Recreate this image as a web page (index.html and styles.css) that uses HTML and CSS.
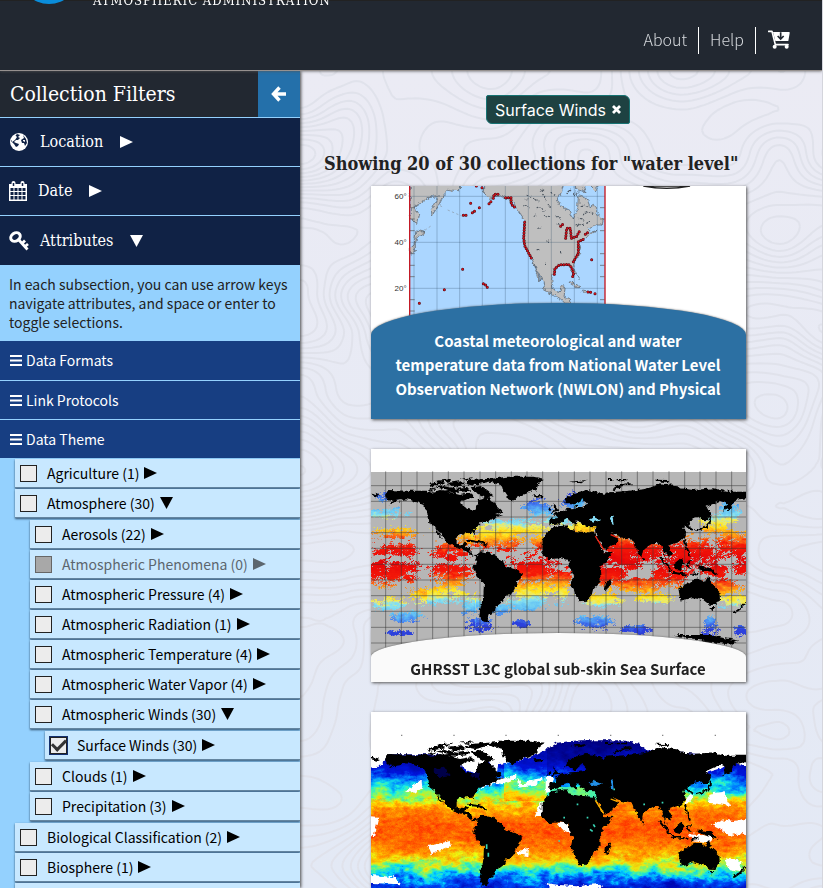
FILE: index.html
```html
<!DOCTYPE html>
<html lang="en">
<head>
<meta charset="utf-8">
<meta name="viewport" content="width=device-width, initial-scale=1">
<title>Collections</title>
<link rel="stylesheet" href="styles.css">
</head>
<body>
<svg class="defs" width="0" height="0" aria-hidden="true">
  <defs>
    <filter id="rough" x="-5%" y="-5%" width="110%" height="110%">
      <feTurbulence type="fractalNoise" baseFrequency="0.07" numOctaves="3" seed="4"/>
      <feDisplacementMap in="SourceGraphic" scale="16" xChannelSelector="R" yChannelSelector="G"/>
    </filter>
    <symbol id="right" viewBox="0 0 13 12"><path d="M0 0 13 6 0 12Z" fill="currentColor"/></symbol>
    <symbol id="down" viewBox="0 0 13 12"><path d="M0 0H13L6.500 12Z" fill="currentColor"/></symbol>
    <symbol id="bars" viewBox="0 0 12 11"><path d="M0 1H12M0 5.500H12M0 10H12" stroke="currentColor" stroke-width="2"/></symbol>
    <g id="land">
      <path d="M75 165 85 150 140 152 200 152 215 158 240 150 300 165 330 160 345 172 312 180 300 185 305 198 345 210 352 192 350 180 380 170 400 190 427 215 405 222 430 225 400 235 385 245 360 250 340 275 346 292 335 278 300 282 290 290 290 310 300 317 318 305 322 312 312 322 330 325 335 345 355 344 350 352 336 348 322 335 285 322 262 308 250 290 230 265 240 285 252 302 238 290 225 262 208 250 205 220 190 195 160 182 140 178 110 182 80 200 100 183 80 180Z"/>
      <path d="M385 118 440 110 520 110 556 117 535 130 530 150 500 160 470 170 458 184 445 178 430 155 425 135 390 125ZM330 120 420 114 395 124 345 135 312 128ZM205 148 250 138 300 148 290 158 230 157ZM330 142 365 138 385 152 402 168 382 175 350 158ZM205 131 250 126 255 133 210 140ZM262 128 300 124 315 134 280 142ZM230 143 205 155 270 150ZM300 116 340 112 325 120ZM290 143 325 140 330 152 305 156ZM232 122 275 117 270 124 236 128Z"/>
      <path d="M355 340 365 334 400 342 435 368 440 380 480 392 486 405 470 430 465 452 440 468 435 480 415 495 405 500 400 520 385 525 382 540 390 547 368 545 358 530 362 500 370 470 372 430 350 410 340 385 348 365Z"/>
      <path d="M575 262 620 256 625 268 660 275 703 278 713 302 733 337 758 335 745 358 720 385 722 425 700 445 695 465 678 482 655 484 645 460 635 430 640 405 628 380 625 360 600 355 565 358 545 335 545 300 560 280ZM750 415 754 428 742 453 732 450 735 430Z"/>
      <path d="M568 236 592 234 582 222 610 212 630 205 660 203 682 195 668 180 655 190 645 201 635 190 612 190 618 178 640 160 680 150 700 152 730 165 735 158 760 156 800 153 850 148 880 140 900 130 950 136 960 145 1000 150 1060 145 1100 155 1158 155 1158 175 1125 180 1112 205 1090 214 1098 190 1080 182 1040 200 1050 222 1044 240 1028 240 1020 232 990 240 985 255 1002 268 996 272 975 256 970 262 978 288 960 305 940 312 925 318 936 340 930 350 915 337 920 365 905 325 895 305 875 312 850 328 845 352 832 335 820 300 785 292 755 278 775 296 764 315 735 331 712 295 705 272 706 262 680 261 666 252 650 240 652 258 640 252 623 236 612 240 595 254 568 256Z"/>
      <path d="M580 190 592 200 602 212 575 216 582 205ZM564 204 574 202 572 212 562 212ZM520 166 550 165 548 172 525 173ZM630 125 680 120 660 130ZM735 117H760V120H735ZM770 117H802V121H770ZM885 119 925 120 920 126 890 124Z"/>
      <path d="M940 375 965 355 974 368 960 390 946 386ZM1010 376 1030 379 1052 385 1076 405 1058 400 1040 395 1020 388ZM980 365 995 363 985 372 992 384 982 382ZM955 445 985 430 1000 418 1020 415 1035 425 1045 408 1055 432 1078 455 1080 475 1066 495 1048 494 1030 480 1000 475 962 485ZM1048 501 1063 501 1056 512ZM33 158 60 165 50 170 33 166ZM845 350 853 354 850 362Z"/>
      <path d="M760 149Q780 132 815 133M1006 271 1036 263 1049 246 1050 230M900 350 936 396M936 398 985 404M975 300 980 322 990 350M1122 520 1140 506 1158 488M325 302 355 306 380 314M994 405 1015 402" fill="none" stroke="#000" stroke-width="6"/>
    </g>
  </defs>
</svg>

<div class="app">
  <header class="top">
    <div class="brand"><span class="seal"></span><span class="agency">ATMOSPHERIC ADMINISTRATION</span></div>
    <nav class="links">
      <a href="#about">About</a>
      <a href="#help">Help</a>
      <a href="#cart" aria-label="Cart"><svg width="22" height="19" viewBox="0 0 66 57" aria-hidden="true"><path d="M2 4H12L22 44H60" fill="none" stroke="#fff" stroke-width="5" stroke-linecap="round" stroke-linejoin="round"/><path d="M15 6H63Q66 6 65 10L61 33H22Z" fill="#fff"/><path d="M38 7V25M29 18 38 27 47 18" fill="none" stroke="#222831" stroke-width="5"/><circle cx="20" cy="50" r="6" fill="#fff"/><circle cx="56" cy="50" r="6" fill="#fff"/></svg></a>
    </nav>
  </header>

  <div class="body">
    <aside class="side">
      <div class="side-title"><h1>Collection Filters</h1>
        <button class="collapse" aria-label="Hide filters"><svg width="16" height="16" viewBox="0 0 16 16" aria-hidden="true"><path d="M8.500 1.500 2.500 8 8.500 14.500M3 8H15" fill="none" stroke="#fff" stroke-width="3.400"/></svg></button>
      </div>
      <button class="filter"><svg width="20" height="20" viewBox="0 0 20 20" aria-hidden="true"><circle cx="10" cy="10" r="9" fill="#fff"/><path d="M8 2 11 3 9 5 11 6 9 8 7 8 5 10 7 11 10 12 9 14 7 15 5 12 2 9 3 8 4 6ZM14 3 17 7 18 11 16 14 15 11 13 11 12 8 15 6Z" fill="#102245"/><path d="M3 6 6 3 8 5 6 8 3 10ZM14 8 16 8 16 10 14 9Z" fill="#fff"/></svg><span>Location</span><svg class="caret" width="13" height="12" aria-hidden="true"><use href="#right"/></svg></button>
      <button class="filter"><svg width="18" height="20" viewBox="0 0 18 20" aria-hidden="true"><path d="M0 3H18V20H0Z" fill="#fff"/><path d="M1.500 7H4.500V10H1.500ZM5.500 7H8.500V10H5.500ZM9.500 7H12.500V10H9.500ZM13.500 7H16.500V10H13.500ZM1.500 11H4.500V14H1.500ZM5.500 11H8.500V14H5.500ZM9.500 11H12.500V14H9.500ZM13.500 11H16.500V14H13.500ZM1.500 15H4.500V18.500H1.500ZM5.500 15H8.500V18.500H5.500ZM9.500 15H12.500V18.500H9.500ZM13.500 15H16.500V18.500H13.500Z" fill="#102245"/><path d="M4.500 2V5M13.500 2V5" stroke="#fff" stroke-width="4" stroke-linecap="round"/><path d="M4.500 2V5M13.500 2V5" stroke="#102245" stroke-width="1.500"/></svg><span>Date</span><svg class="caret" width="13" height="12" aria-hidden="true"><use href="#right"/></svg></button>
      <button class="filter open"><svg width="20" height="20" viewBox="0 0 20 20" aria-hidden="true"><ellipse cx="6.500" cy="6" rx="4" ry="5" transform="rotate(55 6.500 6)" fill="none" stroke="#fff" stroke-width="3"/><path d="M9 8 18.500 18.500M13 12.500 16 9.500M16 15.500 19 13" fill="none" stroke="#fff" stroke-width="2.800"/></svg><span>Attributes</span><svg class="caret" width="13" height="12" aria-hidden="true"><use href="#down"/></svg></button>
      <p class="hint">In each subsection, you can use arrow keys navigate attributes, and space or enter to toggle selections.</p>
      <button class="section"><svg width="12" height="11" aria-hidden="true"><use href="#bars"/></svg>Data Formats</button>
      <button class="section"><svg width="12" height="11" aria-hidden="true"><use href="#bars"/></svg>Link Protocols</button>
      <button class="section"><svg width="12" height="11" aria-hidden="true"><use href="#bars"/></svg>Data Theme</button>
      <ul class="tree">
        <li><div class="row"><label><input type="checkbox">Agriculture (1)</label><button aria-label="Expand Agriculture"><svg width="13" height="12"><use href="#right"/></svg></button></div></li>
        <li><div class="row"><label><input type="checkbox">Atmosphere (30)</label><button aria-label="Collapse Atmosphere"><svg width="13" height="12"><use href="#down"/></svg></button></div>
          <ul>
            <li><div class="row"><label><input type="checkbox">Aerosols (22)</label><button aria-label="Expand Aerosols"><svg width="13" height="12"><use href="#right"/></svg></button></div></li>
            <li><div class="row off"><label><input type="checkbox" disabled>Atmospheric Phenomena (0)</label><button aria-label="Expand Phenomena"><svg width="13" height="12"><use href="#right"/></svg></button></div></li>
            <li><div class="row"><label><input type="checkbox">Atmospheric Pressure (4)</label><button aria-label="Expand Pressure"><svg width="13" height="12"><use href="#right"/></svg></button></div></li>
            <li><div class="row"><label><input type="checkbox">Atmospheric Radiation (1)</label><button aria-label="Expand Radiation"><svg width="13" height="12"><use href="#right"/></svg></button></div></li>
            <li><div class="row"><label><input type="checkbox">Atmospheric Temperature (4)</label><button aria-label="Expand Temperature"><svg width="13" height="12"><use href="#right"/></svg></button></div></li>
            <li><div class="row"><label><input type="checkbox">Atmospheric Water Vapor (4)</label><button aria-label="Expand Water Vapor"><svg width="13" height="12"><use href="#right"/></svg></button></div></li>
            <li><div class="row"><label><input type="checkbox">Atmospheric Winds (30)</label><button aria-label="Collapse Winds"><svg width="13" height="12"><use href="#down"/></svg></button></div>
              <ul>
                <li><div class="row"><label><input type="checkbox" checked>Surface Winds (30)</label><button aria-label="Expand Surface Winds"><svg width="13" height="12"><use href="#right"/></svg></button></div></li>
              </ul>
            </li>
            <li><div class="row"><label><input type="checkbox">Clouds (1)</label><button aria-label="Expand Clouds"><svg width="13" height="12"><use href="#right"/></svg></button></div></li>
            <li><div class="row"><label><input type="checkbox">Precipitation (3)</label><button aria-label="Expand Precipitation"><svg width="13" height="12"><use href="#right"/></svg></button></div></li>
          </ul>
        </li>
        <li><div class="row"><label><input type="checkbox">Biological Classification (2)</label><button aria-label="Expand Biological Classification"><svg width="13" height="12"><use href="#right"/></svg></button></div></li>
        <li><div class="row"><label><input type="checkbox">Biosphere (1)</label><button aria-label="Expand Biosphere"><svg width="13" height="12"><use href="#right"/></svg></button></div></li>
        <li><div class="row"></div></li>
      </ul>
    </aside>

    <main class="results">
      <svg class="topo" viewBox="0 0 522 818" preserveAspectRatio="xMidYMid slice" aria-hidden="true"><path id="contours"/></svg>
      <button class="chip">Surface Winds <svg width="9" height="9" viewBox="0 0 9 9" aria-hidden="true"><path d="M1 1 8 8M8 1 1 8" stroke="#fff" stroke-width="2.800"/></svg></button>
      <h2>Showing 20 of 30 collections for "water level"</h2>
      <div class="cards">
        <a class="card blue" href="#nwlon">
          <svg class="art" viewBox="33 33 1125 700" preserveAspectRatio="xMidYMin slice" aria-hidden="true">
            <rect x="33" y="33" width="1125" height="700" fill="#fff"/>
            <rect x="149" y="0" width="586" height="450" fill="#abd6ff"/>
            <g fill="#bfbfbf" stroke="#4d5660" stroke-width="2" filter="url(#rough)">
              <path d="M372 23 370 50 392 70 405 65 425 62 442 70 460 85 475 110 492 135 490 190 500 225 515 250 524 270 535 295 548 320 556 345 575 358 600 370 615 385 633 385 631 370 612 368 616 333 604 332 600 350 580 345 575 315 582 285 590 272 610 270 632 272 638 300 646 298 640 265 662 235 655 205 680 185 712 166 692 172 682 163 700 150 726 150 730 135 715 120 700 88 690 95 680 70 655 62 653 100 640 132 630 108 605 95 592 75 605 50 612 23Z"/>
              <path d="M151 23H300L298 48 268 44 250 60 235 92 216 122 214 105 235 65 205 68 165 95 178 120 172 150 160 135 151 130ZM168 165 195 172 172 186 166 205 166 232 151 238 151 220 162 210ZM630 320 662 337 650 338 630 325ZM668 345 682 348 676 354ZM630 23H670L675 50 655 45ZM680 23H725L705 48Z"/>
              <path d="M520 265 535 300 543 318 532 305ZM663 350H670M648 295 658 315"/>
            </g>
            <path d="M490 92l18 3M518 70l15 8M530 98l13-3M552 120l18 5M548 60l10 15M500 60l12 5M590 125l15 5M562 90l12 8M575 55l12 7M655 130l18 5M650 150l22-3M680 110l20 5M665 90l18 8M520 125l8-5M535 155l8 5M560 200l8-3M530 225l8-4M600 230h8M555 265h8M640 60l15-10M540 45l15 5M668 120l15-10M680 145l12-8M505 75l-8-3M600 150l-10-3M545 100l10 12M630 45l-10 8" stroke="#4d5660" stroke-width="4" stroke-dasharray="5 3" filter="url(#rough)"/>
            <path d="M240 92l12 6M263 105l42 18M172 182l42-30" stroke="#8b98a5" stroke-width="2" stroke-dasharray="7 7"/>
            <path d="M162 33V430M231 33V430M299 33V430M367 33V430M436 33V430M505 33V430M574 33V430M643 33V430M712 33V430M149 64H735M149 202H735M149 340H735" stroke="#2d4961" stroke-opacity=".55" stroke-width="1.500"/>
            <path d="M150 98H164M150 132H164M150 167H164M150 236H164M150 271H164M150 305H164M150 374H164M150 408H164M720 98H734M720 132H734M720 167H734M720 236H734M720 271H734M720 305H734M720 374H734" stroke="#555" stroke-width="2"/>
            <path d="M149 33V430M735 33V430" stroke="#c31925" stroke-width="4"/>
            <g class="stations"><path id="st" d="M310 121H320M337 113 347 106M358 98H366M387 86 394 79M400 70 402 58 418 58M437 68 453 68 454 88 466 98M494 142 491 190 494 212 515 251M178 385h.1M253 344h.1M308 283h.1M332 85h.1M366 38h.1M349 33h.1M370 326 378 331 385 341M583 298 585 280 598 270 625 268 634 276 641 295 637 308M640 260 655 235 655 200 676 190M602 154 608 148M617 190 620 160 631 160 634 190 650 184 659 168M676 178 687 170M695 254h.1M684 351 695 352M705 356h.1"/><use href="#st" class="inner"/></g>
            <path d="M850 33Q920 47 990 33Z" fill="#d5d5d5" stroke="#222" stroke-width="4"/>
            <g class="axis"><text x="140" y="73">60°</text><text x="140" y="211">40°</text><text x="140" y="349">20°</text></g>
          </svg>
          <span class="caption">Coastal meteorological and water temperature data from National Water Level Observation Network (NWLON) and Physical</span>
        </a>
        <a class="card" href="#ghrsst">
          <canvas class="art" id="sst" width="375" height="233"></canvas>
          <svg class="art" viewBox="33 27 1125 699" preserveAspectRatio="xMidYMin slice" aria-hidden="true">
            <path d="M77 94V726M124 94V726M171 94V726M218 94V726M265 94V726M312 94V726M360 94V726M407 94V726M454 94V726M501 94V726M548 94V726M596 94V726M643 94V726M690 94V726M738 94V726M785 94V726M832 94V726M879 94V726M927 94V726M974 94V726M1020 94V726M1068 94V726M1115 94V726M33 137H1158M33 184H1158M33 231H1158M33 278H1158M33 325H1158M33 373H1158M33 420H1158M33 467H1158M33 514H1158M33 562H1158M33 609H1158" stroke="#333" stroke-opacity=".5" stroke-width="3"/>
            <g filter="url(#rough)"><use href="#land"/><path d="M940 585 1050 585 1135 602 1110 614 1030 602Z"/>
              <path d="M685 240 702 230 724 240 705 246Z" fill="#84daf4"/><path d="M750 232 760 226 764 255 753 252Z" fill="#84daf4"/></g>
            <path d="M706 288 731 329M752 284 773 293" stroke="#f22210" stroke-width="4"/>
            <path d="M640 196 662 188 668 176" fill="none" stroke="#48b4f0" stroke-width="4"/>
          </svg>
          <span class="caption">GHRSST L3C global sub-skin Sea Surface</span>
        </a>
        <a class="card" href="#wind" aria-label="Sea surface collection">
          <canvas class="art" id="heat" width="375" height="233"></canvas>
          <svg class="art" viewBox="33 33 1125 699" preserveAspectRatio="xMidYMin slice" aria-hidden="true">
            <g filter="url(#rough)">
              <path d="M13 13H1178V195L1110 185 1085 202 1040 215 1030 160 860 148 835 128 790 118 660 118 590 125 540 155 520 165 470 180 440 185 415 190 410 215 385 180 360 190 345 218 300 190 240 160 90 160 50 200 13 205ZM135 272 185 238 187 258 165 275ZM205 435 270 420 272 435 215 460ZM13 348 55 350 42 405 13 408ZM470 452 504 440 502 465 475 460ZM470 225 485 250 525 235 550 230 520 255 475 260ZM355 270 385 240 440 230 470 220 465 235 430 250 405 245ZM557 225H580L570 270 557 280ZM545 300 525 345 548 345ZM590 365 620 365 635 400 610 388ZM1045 278 1090 272 1112 315 1045 305ZM1055 370 1090 355 1120 360 1178 350V405L1130 398 1110 405 1085 385ZM1090 470 1145 480 1140 510 1110 505ZM985 400 1060 405 1050 425 1000 418ZM13 520 100 528 120 550 13 545ZM555 545 600 552 650 556 720 548 730 556 700 570 660 562 580 566ZM975 300 990 280 1000 285 980 310Z" fill="#fff"/>
              <use href="#land" y="9"/>
              <path d="M215 205 255 200 270 225 240 230ZM330 220 360 215 355 235Z" fill="#05096a" opacity=".7"/>
              <path d="M300 195 320 180 350 190 350 205 330 212Z" fill="#fff"/>
              <path d="M685 249 702 239 724 249 705 255ZM750 241 760 235 764 264 753 261Z" fill="#208fe8"/>
            </g>
            <path d="M595 420h5M650 310h5M700 370l5 8M680 350h5M610 350h5M760 265h5M640 270h6M380 430v14M385 455v12M690 385l8 6M850 310h5M905 305h5" stroke="#38d6b6" stroke-width="5"/>
            <path d="M706 298 731 337M752 294 773 302" stroke="#ffb200" stroke-width="4"/>
            <path d="M123 103h4M280 103h4M436 103h4M593 103h4M750 103h4M906 103h4M1064 103h4" stroke="#888" stroke-width="4"/>
          </svg>
        </a>
      </div>
    </main>
  </div>
</div>
<script src="draw.js"></script>
</body>
</html>
```
FILE: styles.css
```css
* { box-sizing: border-box; }
body {
  margin: 0;
  font-family: "Noto Sans CJK SC", "Noto Sans", sans-serif;
  font-size: 14px;
  line-height: 19px;
  color: #222;
}
button { font: inherit; color: inherit; border: 0; padding: 0; background: none; cursor: pointer; }
.defs { position: absolute; }
.app { height: 100vh; display: flex; flex-direction: column; overflow: hidden; border-right: 1px solid #d4d5dc; }

.top {
  position: relative;
  z-index: 2;
  height: 71px;
  flex: none;
  display: flex;
  justify-content: space-between;
  align-items: flex-start;
  padding: 0 32px 0 19px;
  background: #222831;
  border-top: 1px solid #222;
  border-bottom: 1px solid #96918f;
  box-shadow: 0 0 3px #555;
}
.brand { display: flex; align-items: flex-end; gap: 14px; height: 60px; margin-top: -57px; }
.seal { width: 60px; height: 60px; border-radius: 50%; background: #0a8ddb; }
.agency { margin-bottom: -4px; color: #fff; font-family: "DejaVu Serif Condensed", "DejaVu Serif", serif; font-size: 13px; line-height: 14px; letter-spacing: 1px; }
.links { display: flex; padding-top: 26px; }
.links a {
  display: flex;
  align-items: center;
  height: 27px;
  padding: 0 11px 3px;
  color: #d5d8dc;
  font-size: 16px;
  font-weight: 300;
  line-height: 24px;
  text-decoration: none;
  border-right: 1px solid #fff;
}
.links a:last-child { padding: 0 0 3px 12px; border: 0; }

.body { flex: 1; min-height: 0; display: flex; }
.side {
  width: 300px;
  flex: none;
  overflow-y: auto;
  scrollbar-width: none;
  background: #94d1fe;
  box-shadow: 1px 0 3px #444;
  z-index: 1;
}
.side-title { display: flex; height: 47px; background: #222831; border-bottom: 1px solid #94d1fe; }
.side-title h1 {
  flex: 1;
  margin: 0;
  padding-left: 10px;
  color: #fff;
  font: 400 21px/46px "DejaVu Serif Condensed", "DejaVu Serif", serif;
}
.collapse { width: 42px; display: grid; place-items: center; background: #2470aa; }
.filter {
  display: flex;
  align-items: center;
  width: 100%;
  height: 49px;
  padding: 0 9px;
  gap: 11px;
  background: #102245;
  border-bottom: 1px solid #94d1fe;
  color: #fff;
  font: 400 16px/24px "DejaVu Serif Condensed", "DejaVu Serif", serif;
}
.filter.open { border-bottom: 0; }
.filter .caret { margin-left: 6px; }
.hint { margin: 0; padding: 10px 9px 9px; }
.section {
  display: flex;
  align-items: center;
  gap: 4px;
  width: 100%;
  height: 39px;
  padding: 0 10px;
  background: #173e82;
  color: #fff;
}
.section + .section { border-top: 1px solid #94d1fe; }
.tree, .tree ul { margin: 0; padding: 0 0 0 15px; list-style: none; }
.tree ul { padding: 1px 0 1px 15px; }
.row {
  display: flex;
  align-items: center;
  gap: 5px;
  height: 29px;
  margin-top: 1px;
  padding-left: 5px;
  background: #c8e8ff;
  color: #000;
  box-shadow: 0 1px 2px #31506c;
  border-bottom: 1px solid #6485a0;
}
.row label { display: flex; align-items: center; gap: 10px; }
.row button { display: flex; }
.row.off { color: #5c666e; }
input[type="checkbox"] {
  appearance: none;
  width: 17px;
  height: 17px;
  margin: 0;
  background: #ececec;
  border: 1px solid #222;
}
input[type="checkbox"]:disabled { background: #a8a8a8; border-color: #666; }
input[type="checkbox"]:checked { display: grid; place-items: center; outline: 1px solid #14306e; }
input[type="checkbox"]:checked::before {
  content: "";
  width: 11px;
  height: 6px;
  margin-bottom: 4px;
  border: solid #333;
  border-width: 0 0 3px 3px;
  rotate: -45deg;
}

.results {
  position: relative;
  flex: 1;
  min-width: 0;
  overflow-y: auto;
  scrollbar-width: none;
  display: flex;
  flex-direction: column;
  align-items: center;
  padding: 24px 6px 0 0;
  background: linear-gradient(#ebebf4, #e3e9f5);
}
.topo { position: absolute; inset: 0; width: 100%; height: 100%; }
.topo path { fill: none; stroke: #e0e2eb; stroke-width: 2; }
.chip {
  position: relative;
  flex: none;
  display: flex;
  align-items: center;
  gap: 6px;
  height: 29px;
  padding: 0 8px;
  color: #fff;
  background: #1e4242;
  border: 1px solid #167373;
  border-radius: 2px 6px 2px 6px;
  font: 400 16px/24px Inter, sans-serif;
}
.results h2 {
  position: relative;
  align-self: stretch;
  margin: 26px 0 9px;
  padding-left: 24px;
  font: 700 18px/27px "DejaVu Serif Condensed", "DejaVu Serif", serif;
  white-space: nowrap;
}
.cards { position: relative; width: 100%; max-width: 375px; display: flex; flex-direction: column; gap: 30px; }
.card {
  position: relative;
  display: flex;
  align-items: flex-end;
  height: 233px;
  flex: none;
  overflow: hidden;
  background: #fff;
  box-shadow: 1px 1px 3px #555;
  color: #222;
  text-decoration: none;
}
.art { position: absolute; inset: 0; width: 100%; height: 100%; }
.caption {
  position: relative;
  width: 100%;
  padding: 24px 28px 1px;
  text-align: center;
  font-size: 15px;
  font-weight: 700;
  line-height: 24px;
  background: #fafafa;
  border-radius: 50% 50% 0 0 / 24px;
  box-shadow: 0 0 2px #555;
}
.blue .caption { padding: 26px 24px 18px; color: #fff; background: #2c70a3; border-radius: 50% 50% 0 0 / 32px; }
.stations { fill: none; stroke: #4a0b10; stroke-width: 9; stroke-linecap: round; stroke-dasharray: 0 8; }
.stations .inner { stroke: #d4131f; stroke-width: 6; }
.axis { font: 24px "Liberation Sans", sans-serif; fill: #333; text-anchor: end; }
```
FILE: draw.js
```js
function hash(x, y) {
  const s = Math.sin(x * 127.1 + y * 311.7) * 43758.5453;
  return s - Math.floor(s);
}
function noise(x, y) {
  const i = Math.floor(x), j = Math.floor(y);
  let u = x - i, v = y - j;
  u = u * u * (3 - 2 * u);
  v = v * v * (3 - 2 * v);
  const a = hash(i, j) * (1 - u) + hash(i + 1, j) * u;
  const b = hash(i, j + 1) * (1 - u) + hash(i + 1, j + 1) * u;
  return a * (1 - v) + b * v;
}
function fbm(x, y) {
  return noise(x, y) * 0.5 + noise(x * 2, y * 2) * 0.28 + noise(x * 4, y * 4) * 0.22;
}

// Contour lines of a smooth height field, by marching squares.
function contours() {
  const step = 4, f = (x, y) => noise(x / 95 + 3, y / 80 + 8) * 0.75 + noise(x / 48, y / 44) * 0.25;
  let d = "";
  for (let y = 0; y < 818; y += step) {
    for (let x = 0; x < 522; x += step) {
      const p = [[x, y], [x + step, y], [x + step, y + step], [x, y + step]];
      const h = p.map(q => f(q[0], q[1]));
      const lo = Math.min(...h), hi = Math.max(...h);
      for (let k = Math.ceil(lo / 0.05); k * 0.05 < hi; k++) {
        const lv = k * 0.05, cut = [];
        for (let e = 0; e < 4; e++) {
          const n = (e + 1) % 4;
          if ((h[e] < lv) !== (h[n] < lv)) {
            const t = (lv - h[e]) / (h[n] - h[e]);
            cut.push((p[e][0] + (p[n][0] - p[e][0]) * t).toFixed(1) + " " + (p[e][1] + (p[n][1] - p[e][1]) * t).toFixed(1));
          }
        }
        for (let c = 0; c + 1 < cut.length; c += 2) d += "M" + cut[c] + "L" + cut[c + 1];
      }
    }
  }
  document.getElementById("contours").setAttribute("d", d);
}

function ramp(stops, t) {
  if (t <= stops[0][0]) return stops[0][1];
  for (let i = 1; i < stops.length; i++) {
    if (t <= stops[i][0]) {
      const a = stops[i - 1], b = stops[i], k = (t - a[0]) / (b[0] - a[0]);
      return a[1].map((c, n) => c + (b[1][n] - c) * k);
    }
  }
  return stops[stops.length - 1][1];
}

function paint(id, top, pixel) {
  const cv = document.getElementById(id), ctx = cv.getContext("2d");
  const img = ctx.createImageData(cv.width, cv.height);
  for (let y = 0; y < cv.height; y++) {
    for (let x = 0; x < cv.width; x++) {
      const c = pixel(33 + x * 3, top + y * 3), o = (y * cv.width + x) * 4;
      img.data[o] = c[0];
      img.data[o + 1] = c[1];
      img.data[o + 2] = c[2];
      img.data[o + 3] = 255;
    }
  }
  ctx.putImageData(img, 0, 0);
}

// Swath coverage: centre x, centre y, radius x, radius y.
const swaths = [
  [90, 390, 95, 50], [100, 330, 90, 25], [110, 275, 95, 24], [70, 218, 75, 20], [270, 338, 60, 42], [270, 400, 75, 55],
  [230, 465, 120, 32], [80, 492, 70, 22], [140, 525, 60, 20], [330, 490, 50, 45], [400, 295, 120, 42], [320, 298, 50, 25],
  [450, 262, 110, 30], [525, 262, 55, 20], [520, 390, 95, 55], [520, 450, 85, 42], [605, 430, 42, 65], [500, 490, 65, 24],
  [420, 510, 30, 20], [520, 205, 60, 32], [670, 260, 65, 22], [640, 180, 50, 30], [590, 240, 60, 20], [540, 310, 25, 30],
  [790, 330, 75, 62], [750, 400, 65, 62], [875, 330, 55, 42], [930, 405, 65, 52], [840, 436, 110, 30], [960, 350, 70, 62],
  [730, 480, 65, 28], [880, 472, 80, 20], [700, 545, 65, 25], [830, 567, 55, 14], [1010, 330, 90, 50], [1120, 312, 70, 50],
  [1140, 385, 40, 25], [1090, 440, 75, 30], [1120, 480, 60, 24], [1065, 265, 45, 14], [1070, 243, 50, 22], [1110, 205, 35, 38],
  [1050, 560, 26, 38], [1140, 572, 35, 18], [75, 170, 40, 20], [110, 578, 50, 10], [480, 548, 35, 15], [360, 555, 50, 30], [1070, 390, 50, 22]
];
const sstRamp = [[0, [230, 5, 8]], [50, [245, 25, 8]], [68, [250, 90, 20]], [88, [255, 165, 20]], [108, [255, 230, 30]], [126, [235, 235, 110]], [138, [135, 225, 240]], [165, [95, 190, 245]], [188, [70, 130, 240]], [215, [45, 65, 220]]];
paint("sst", 27, (x, y) => {
  if (y < 94) return [255, 255, 255];
  let cover = 0;
  for (const s of swaths) {
    const r = Math.hypot((x - s[0]) / s[2], (y - s[1]) / s[3]);
    cover = Math.max(cover, Math.min(0.8, 1.2 - r));
  }
  const n = fbm(x / 30 + 7, y / 20) * 0.5 + fbm(x / 11 + y / 16, y / 7) * 0.5;
  const k = (cover * 0.5 + n + hash(x, y) * 0.16 - 0.8) * 9;
  if (cover <= 0 || k < 0) return [182, 182, 182];
  const cool = (x > 200 && x < 345) || (x > 345 && x < 640) ? 18 : 0;
  const d = y < 365 ? 365 - y : (y - 365) * 1.05;
  const c = ramp(sstRamp, d + cool + (fbm(x / 14, y / 9) - 0.5) * 40);
  const a = Math.min(1, 0.35 + k);
  return c.map(v => v * a + 182 * (1 - a));
});

const jet = [[130, [0, 0, 130]], [215, [0, 20, 220]], [240, [0, 130, 255]], [262, [20, 235, 230]], [283, [150, 250, 80]], [300, [255, 215, 0]], [325, [255, 140, 0]], [385, [255, 80, 0]], [420, [255, 105, 0]], [460, [255, 170, 0]], [484, [230, 235, 20]], [503, [80, 245, 150]], [520, [0, 210, 255]], [540, [0, 70, 245]], [570, [0, 10, 190]], [620, [0, 0, 120]]];
paint("heat", 33, (x, y) => {
  let w = y + (fbm(x / 55, y / 34) - 0.5) * 75 + (fbm(x / 14, y / 9) - 0.5) * 40;
  if (x > 430 && x < 560 && y < 300) w += 22;
  if (x > 560 && x < 720 && y > 255 && y < 300) w = 272 + (w - y) * 0.3;
  if (x > 730 && x < 950 && y > 280 && y < 330) w += 35;
  const c = ramp(jet, w), tint = (fbm(x / 12 + 30, y / 8) - 0.5) * 110;
  if (y > 290 && y < 480) return [c[0], c[1] + tint, c[2]];
  return c;
});
contours();
```
